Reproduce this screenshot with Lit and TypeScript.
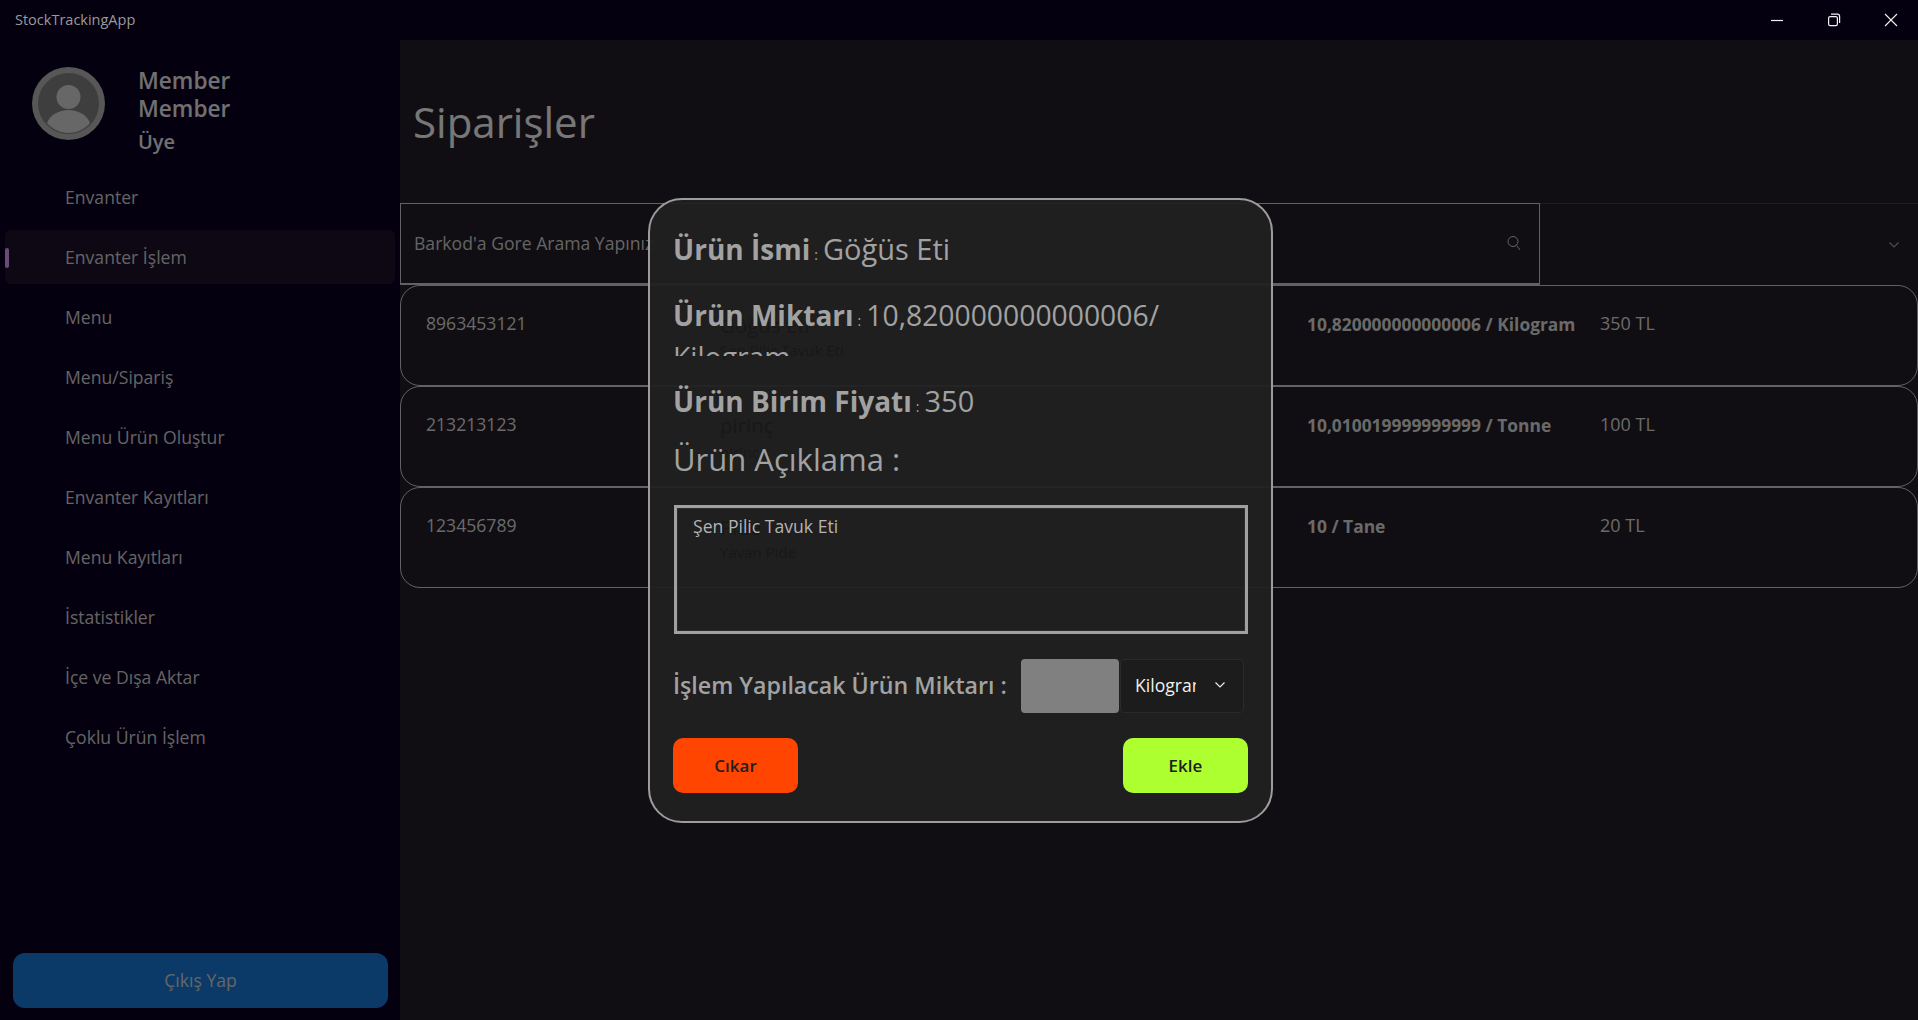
import {css, html, LitElement} from 'lit';
import {customElement} from 'lit/decorators.js';

const NAV = [
    'Envanter',
    'Envanter İşlem',
    'Menu',
    'Menu/Sipariş',
    'Menu Ürün Oluştur',
    'Envanter Kayıtları',
    'Menu Kayıtları',
    'İstatistikler',
    'İçe ve Dışa Aktar',
    'Çoklu Ürün İşlem',
];

const ROWS = [
    {code: '8963453121', qty: '10,820000000000006 / Kilogram', price: '350 TL'},
    {code: '213213123', qty: '10,010019999999999 / Tonne', price: '100 TL'},
    {code: '123456789', qty: '10 / Tane', price: '20 TL'},
];

// product names of the rows, they shine through the dialog
const GHOSTS = [
    {text: 'Göğüs Eti', top: 109, big: true},
    {text: 'Şen Pilic Tavuk Eti', top: 140, big: false},
    {text: 'pirinç', top: 209, big: true},
    {text: 'pirinç', top: 242, big: false},
    {text: 'Pide', top: 311, big: true},
    {text: 'Yavan Pide', top: 342, big: false},
];

const chevron = html`<svg width="12" height="8" viewBox="0 0 12 8" fill="none" stroke="currentColor" stroke-width="1.1"><path d="M1.5 1.5 6 6l4.5-4.5"/></svg>`;

@customElement('app-root')
export class AppRoot extends LitElement {
    static styles = css`
        :host {
            display: block;
            position: relative;
            width: 1918px;
            height: 1020px;
            overflow: hidden;
            background: #05000f;
            font-family: "Open Sans", "Noto Sans", sans-serif;
        }

        .titlebar {
            height: 40px;
            display: flex;
            align-items: center;
            justify-content: space-between;
            padding: 0 20px 1px 15px;
            box-sizing: border-box;
            color: #9a9a9a;
            font-size: 14.5px;
        }

        .controls {
            display: flex;
            gap: 43px;
            color: #f2f2f2;
        }

        .controls svg {
            display: block;
        }

        .body {
            display: flex;
            height: 980px;
        }

        .sidebar {
            width: 400px;
            flex: none;
            display: flex;
            flex-direction: column;
            background: #0a001e;
        }

        .profile {
            display: flex;
            height: 130px;
            padding: 27px 0 0 32px;
            box-sizing: border-box;
            gap: 33px;
        }

        .avatar {
            display: block;
            flex: none;
        }

        .who {
            color: #e0e0e0;
            font-weight: 600;
            font-size: 22.6px;
            line-height: 28px;
        }

        .who small {
            display: block;
            margin-top: 5px;
            font-size: 20px;
        }

        .nav {
            display: flex;
            flex-direction: column;
            gap: 6px;
            padding: 0 5px;
        }

        .nav-item {
            height: 54px;
            display: flex;
            align-items: center;
            padding: 0 0 1px 60px;
            box-sizing: border-box;
            border-radius: 6px;
            color: #c8c8c8;
            font-size: 17.6px;
            position: relative;
        }

        .nav-item.active {
            background: #1c102a;
        }

        .nav-item.active::before {
            content: '';
            position: absolute;
            left: 0;
            top: 18px;
            width: 4px;
            height: 20px;
            border-radius: 2px;
            background: #d694f4;
        }

        .logout {
            margin: auto 12px 12px 13px;
            height: 55px;
            border: 0;
            border-radius: 12px;
            padding: 0 0 2px;
            background: #1674d0;
            color: #cccccc;
            font: inherit;
            font-size: 17.6px;
        }

        .main {
            flex: 1;
            background: #201c24;
            color: #d4d4d4;
        }

        .title {
            height: 163px;
            display: flex;
            align-items: center;
            padding: 0 0 1px 13px;
            box-sizing: border-box;
            margin: 0;
            font-size: 42px;
            font-weight: 400;
            color: #eeeeee;
        }

        .filters {
            display: flex;
            height: 82px;
        }

        .search {
            width: 1140px;
            box-sizing: border-box;
            border: 1px solid #c4c4c4;
            border-bottom-width: 2px;
            display: flex;
            align-items: center;
            justify-content: space-between;
            padding: 0 18px 1px 13px;
            font-size: 17.6px;
            color: #c8c8c8;
        }

        .combo {
            flex: 1;
            box-sizing: border-box;
            border-top: 1px solid #3c3840;
            display: flex;
            align-items: center;
            justify-content: flex-end;
            padding-right: 18px;
            color: #a0a0a0;
        }

        .row {
            height: 101px;
            box-sizing: border-box;
            border: 1px solid #c4c4c4;
            border-radius: 20px;
            padding: 26px 0 0 25px;
            display: grid;
            grid-template-columns: 881px 293px 1fr;
            align-items: start;
            font-size: 18px;
            line-height: 23px;
        }

        .row b {
            font-size: 17.4px;
            line-height: 25px;
        }

        .row .code {
            font-size: 17.6px;
        }

        .overlay {
            position: absolute;
            left: 0;
            right: 0;
            top: 40px;
            bottom: 0;
            background: rgba(0, 0, 0, 0.5);
        }

        .modal {
            position: absolute;
            left: 648px;
            top: 158px;
            width: 625px;
            height: 625px;
            box-sizing: border-box;
            border: 2px solid #9c9c9c;
            border-radius: 34px;
            background: rgba(33, 33, 33, 0.95);
            padding: 29px 23px 0;
            color: #a2a2a2;
        }

        .ghost {
            position: absolute;
            left: 70px;
            color: #181818;
            font-size: 15px;
            line-height: 20px;
        }

        .ghost.big {
            font-size: 20.5px;
            line-height: 32px;
        }

        .field {
            position: relative;
            font-size: 29px;
            line-height: 40px;
            height: 40px;
            overflow: hidden;
        }

        .field b {
            font-size: 28px;
            font-weight: 700;
        }

        .field i {
            font-style: normal;
            font-size: 14px;
            margin: 0 5px 0 4px;
        }

        .field.qty {
            height: 59px;
            margin-top: 28px;
            font-size: 28.3px;
            line-height: 36px;
        }

        .field.price {
            margin-top: 25px;
        }

        .field.note {
            margin-top: 18px;
            font-size: 31px;
        }

        .textarea {
            position: relative;
            margin: 26px 0 0 1px;
            height: 129px;
            box-sizing: border-box;
            border: 3px solid #a0a0a0;
            padding: 5px 0 0 16px;
            font-size: 17.6px;
            line-height: 26px;
            color: #b4b4b4;
            box-shadow: inset 0 0 0 1px #2c2c2c;
        }

        .amount {
            position: relative;
            display: flex;
            align-items: center;
            margin-top: 25px;
            height: 54px;
        }

        .amount span {
            width: 348px;
            flex: none;
            font-size: 23.2px;
            font-weight: 600;
            white-space: nowrap;
            margin-top: -2px;
        }

        .amount-input {
            width: 98px;
            height: 54px;
            flex: none;
            border-radius: 4px;
            background: #808080;
            margin-right: 1px;
        }

        .unit {
            width: 124px;
            height: 54px;
            box-sizing: border-box;
            border: 1px solid #2a2a2a;
            border-radius: 4px;
            background: #1c1c1c;
            display: flex;
            align-items: center;
            padding: 0 0 2px 14px;
            color: #f0f0f0;
            font-size: 17.6px;
        }

        .unit em {
            font-style: normal;
            width: 61px;
            overflow: hidden;
            white-space: nowrap;
        }

        .unit svg {
            margin-left: 18px;
            flex: none;
        }

        .actions {
            position: relative;
            display: flex;
            justify-content: space-between;
            margin-top: 25px;
        }

        .actions button {
            width: 125px;
            height: 55px;
            border: 0;
            border-radius: 10px;
            color: #202020;
            font: inherit;
            font-size: 17px;
            font-weight: 600;
        }

        .remove {
            background: #ff4500;
        }

        .add {
            background: #adff2f;
        }
    `;

    render() {
        return html`
            <div class="titlebar">
                <span>StockTrackingApp</span>
                <div class="controls">
                    <svg width="14" height="14" viewBox="0 0 14 14" fill="none" stroke="currentColor" stroke-width="1.2"><path d="M1 7.5h12"/></svg>
                    <svg width="14" height="14" viewBox="0 0 14 14" fill="none" stroke="currentColor" stroke-width="1.2"><rect x="1.6" y="3.6" width="8.8" height="9" rx="1.6"/><path d="M4 1.2h6.5A2 2 0 0 1 12.6 3.3V10"/></svg>
                    <svg width="14" height="14" viewBox="0 0 14 14" fill="none" stroke="currentColor" stroke-width="1.1"><path d="M1 1l12 12M13 1 1 13"/></svg>
                </div>
            </div>
            <div class="body">
                <aside class="sidebar">
                    <div class="profile">
                        <svg class="avatar" width="73" height="73" viewBox="0 0 73 73">
                            <circle cx="36.5" cy="36.5" r="36.5" fill="#aeaeae"/>
                            <circle cx="36.5" cy="36.5" r="30.5" fill="#7c7c7c"/>
                            <circle cx="36.5" cy="30" r="12" fill="#cecece"/>
                            <path d="M15 56c3-8 12-13 21.5-13S55 48 58 56c-5 6-13 10-21.5 10S20 62 15 56Z" fill="#cecece"/>
                        </svg>
                        <div class="who">Member<br>Member<small>Üye</small></div>
                    </div>
                    <nav class="nav">
                        ${NAV.map((item, i) => html`<div class="nav-item ${i === 1 ? 'active' : ''}">${item}</div>`)}
                    </nav>
                    <button class="logout">Çıkış Yap</button>
                </aside>
                <main class="main">
                    <h1 class="title">Siparişler</h1>
                    <div class="filters">
                        <div class="search">
                            <span>Barkod'a Gore Arama Yapınız</span>
                            <svg width="14" height="16" viewBox="0 0 14 16" fill="none" stroke="currentColor" stroke-width="1"><circle cx="6" cy="6.5" r="5"/><path d="m9.5 10.5 3.5 4.5"/></svg>
                        </div>
                        <div class="combo">${chevron}</div>
                    </div>
                    ${ROWS.map(row => html`
                        <div class="row">
                            <span class="code">${row.code}</span>
                            <b>${row.qty}</b>
                            <span>${row.price}</span>
                        </div>
                    `)}
                </main>
            </div>
            <div class="overlay">
                <div class="modal">
                    ${GHOSTS.map(g => html`<div class="ghost ${g.big ? 'big' : ''}" style="top:${g.top}px">${g.text}</div>`)}
                    <div class="field"><b>Ürün İsmi</b><i>:</i>Göğüs Eti</div>
                    <div class="field qty"><b>Ürün Miktarı</b><i>:</i>10,820000000000006/ Kilogram</div>
                    <div class="field price"><b>Ürün Birim Fiyatı</b><i>:</i>350</div>
                    <div class="field note">Ürün Açıklama :</div>
                    <div class="textarea">Şen Pilic Tavuk Eti</div>
                    <div class="amount">
                        <span>İşlem Yapılacak Ürün Miktarı :</span>
                        <div class="amount-input"></div>
                        <div class="unit"><em>Kilogram</em>${chevron}</div>
                    </div>
                    <div class="actions">
                        <button class="remove">Cıkar</button>
                        <button class="add">Ekle</button>
                    </div>
                </div>
            </div>
        `;
    }
}
